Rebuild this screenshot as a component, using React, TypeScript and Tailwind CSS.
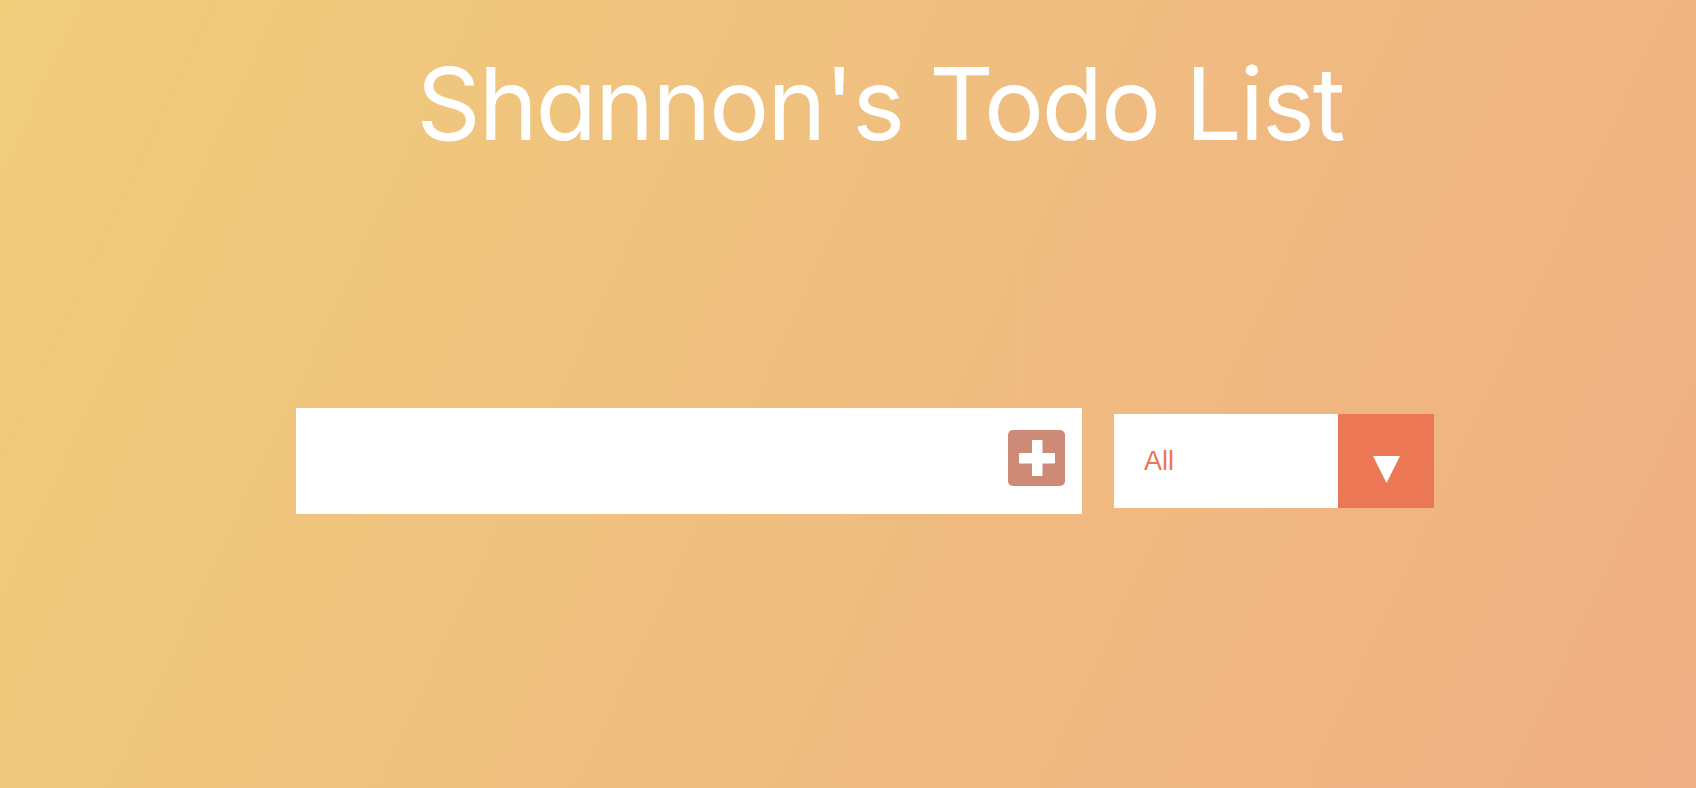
export default function App() {
  return (
    <div className="min-h-[788px] w-full bg-linear-[115deg] from-[#f0cd7b] to-[#efaf84] font-['Inter',sans-serif]">
      <header className="flex justify-center pl-[64px] pt-[44px]">
        <h1 className="text-[100px] font-normal leading-[120px] tracking-[-2px] text-white [font-feature-settings:'cv11']">
          Shannon's Todo List
        </h1>
      </header>

      <form
        className="mt-[244px] flex items-center justify-center gap-[32px] pl-[34px]"
        onSubmit={(e) => e.preventDefault()}
      >
        <div className="flex h-[106px] w-[786px] items-center bg-white pr-[17px]">
          <input
            type="text"
            className="h-full flex-1 bg-transparent px-5 text-2xl text-gray-700 outline-none"
          />
          <button
            type="submit"
            className="mb-[6px] flex h-[56px] w-[57px] items-center justify-center rounded-[5px] bg-[#cd8b77]"
          >
            <svg width="36" height="36" viewBox="0 0 36 36">
              <rect x="13" y="0" width="10.5" height="36" rx="1" fill="white" />
              <rect x="0" y="13" width="36" height="10.5" rx="1" fill="white" />
            </svg>
          </button>
        </div>

        <div className="flex h-[94px] w-[320px] bg-white">
          <div className="flex flex-1 items-center pl-[30px] font-['Liberation_Sans',sans-serif] text-[27px] text-[#ec7754]">
            All
          </div>
          <div className="flex w-[96px] items-center justify-center bg-[#ec7754] pt-[17px]">
            <svg width="27" height="27" viewBox="0 0 27 27">
              <polygon points="0,0 27,0 13.5,27" fill="white" />
            </svg>
          </div>
        </div>
      </form>
    </div>
  );
}
